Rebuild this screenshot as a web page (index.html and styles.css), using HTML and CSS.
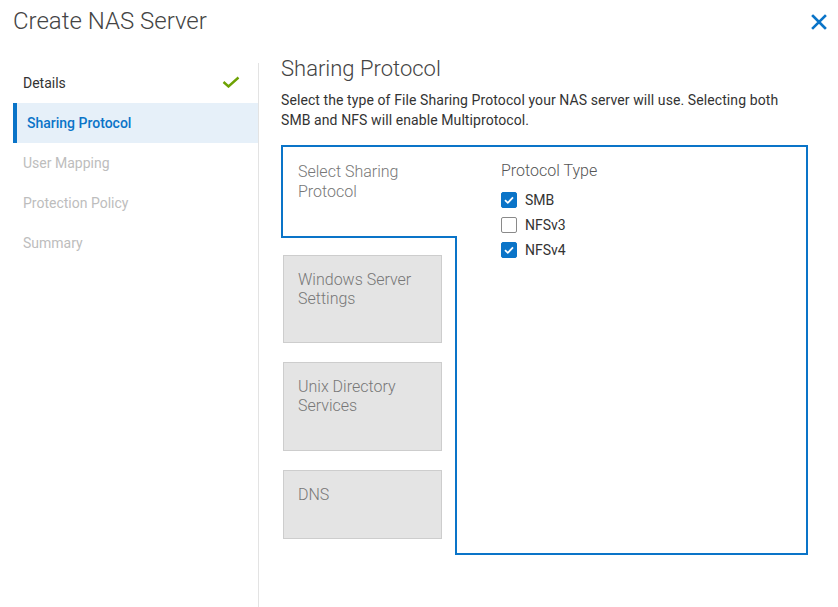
FILE: index.html
```html
<!DOCTYPE html>
<html>
<head>
<meta charset="utf-8">
<link rel="stylesheet" href="styles.css">
</head>
<body>
<div class="dialog">
  <header class="header">
    <h1 class="title">Create NAS Server</h1>
    <button class="close" aria-label="Close">
      <svg width="16" height="16" viewBox="0 0 16 16"><path d="M2 2 L14 14 M14 2 L2 14" stroke="#0a74c8" stroke-width="2.6" stroke-linecap="square" fill="none"/></svg>
    </button>
  </header>
  <div class="main">
    <nav class="steps">
      <div class="step done">
        <span>Details</span>
        <svg class="tick" width="18" height="12" viewBox="0 0 18 12"><path d="M1.5 6 L6.5 10.5 L16.5 1.5" stroke="#6ea204" stroke-width="2.4" fill="none"/></svg>
      </div>
      <div class="step active"><span>Sharing Protocol</span></div>
      <div class="step disabled"><span>User Mapping</span></div>
      <div class="step disabled"><span>Protection Policy</span></div>
      <div class="step disabled"><span>Summary</span></div>
    </nav>
    <section class="content">
      <h2 class="heading">Sharing Protocol</h2>
      <p class="desc">Select the type of File Sharing Protocol your NAS server will use. Selecting both SMB and NFS will enable Multiprotocol.</p>
      <div class="stage">
        <div class="left">
          <div class="tab">Select Sharing Protocol</div>
          <div class="box">Windows Server Settings</div>
          <div class="box box2">Unix Directory Services</div>
          <div class="box box3">DNS</div>
        </div>
        <div class="panel">
          <div class="ptitle">Protocol Type</div>
          <label class="opt"><span class="cb on"><svg width="16" height="16" viewBox="0 0 16 16"><path d="M4 8.2 L6.8 10.8 L12 5.4" stroke="#fff" stroke-width="1.8" fill="none"/></svg></span>SMB</label>
          <label class="opt"><span class="cb"></span>NFSv3</label>
          <label class="opt"><span class="cb on"><svg width="16" height="16" viewBox="0 0 16 16"><path d="M4 8.2 L6.8 10.8 L12 5.4" stroke="#fff" stroke-width="1.8" fill="none"/></svg></span>NFSv4</label>
        </div>
      </div>
    </section>
  </div>
</div>
</body>
</html>
```
FILE: styles.css
```css
* { box-sizing: border-box; }
html, body { margin: 0; padding: 0; background: #fff; }
body { font-family: Roboto, "Noto Sans", Arial, sans-serif; color: #333; width: 838px; height: 607px; overflow: hidden; }
.dialog { display: flex; flex-direction: column; height: 607px; }
.header { display: flex; justify-content: space-between; align-items: flex-start; height: 50px; padding: 5px 0 0 13px; }
.title { margin: 0; font-size: 24px; font-weight: 300; color: #444; line-height: 32px; }
.close { border: 0; background: none; padding: 0; margin: 8px 10px 0 0; width: 18px; height: 18px; display: flex; align-items: center; justify-content: center; cursor: pointer; }
.main { flex: 1; display: flex; }
.steps { width: 246px; margin-left: 13px; margin-top: 13px; border-right: 1px solid #e3e3e3; }
.step { height: 40px; display: flex; align-items: center; justify-content: space-between; padding: 0 18px 0 10px; font-size: 14px; color: #333; }
.step.active { background: #e6f0f9; border-left: 4px solid #0a74c8; color: #0a74c8; font-weight: 500; }
.step.disabled { color: #bdbdbd; }
.tick { margin-top: -2px; }
.content { flex: 1; padding-left: 22px; }
.heading { margin: 0; font-size: 22px; font-weight: 300; color: #444; line-height: 36px; padding-top: 1px; }
.desc { margin: 3px 0 0; font-size: 14px; line-height: 20px; color: #333; width: 520px; letter-spacing: 0.09px; }
.stage { display: flex; margin-top: 15px; }
.left { display: flex; flex-direction: column; width: 174px; }
.tab { width: 176px; height: 93px; border: 2px solid #0a74c8; border-right: 0; background: #fff; position: relative; z-index: 1; padding: 15px 0 0 15px; font-size: 16px; line-height: 20px; color: #777; font-weight: 300; }
.box { width: 159px; height: 88px; margin: 17px 0 0 2px; background: #e4e4e4; border: 1px solid #cdcdcd; padding: 14px 0 0 14px; font-size: 16px; line-height: 19px; color: #777; font-weight: 300; }
.box2 { height: 89px; margin-top: 19px; }
.box3 { height: 69px; margin-top: 19px; }
.panel { width: 353px; height: 410px; margin-left: 0; border: 2px solid #0a74c8; padding: 13px 0 0 44px; }
.ptitle { font-size: 16px; line-height: 22px; color: #555; font-weight: 300; margin-bottom: 5px; }
.opt { display: flex; align-items: center; height: 25px; font-size: 14px; color: #333; }
.cb { width: 16px; height: 16px; border: 1px solid #8a8a8a; border-radius: 2px; margin-right: 8px; display: flex; }
.cb.on { background: #0a74c8; border-color: #0a74c8; }
.cb.on svg { margin: -1px; }
```
